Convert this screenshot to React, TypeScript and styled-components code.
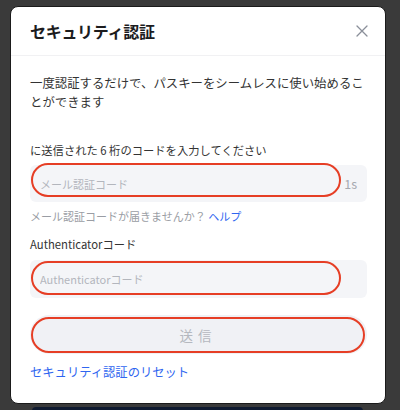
import { ReactElement } from 'react'
import styled, { createGlobalStyle } from 'styled-components'

const GlobalStyle = createGlobalStyle`
  html, body {
    margin: 0;
    padding: 0;
    background: #3a3a3a;
    font-family: "Noto Sans CJK JP", "Noto Sans", sans-serif;
  }
`

const Page = styled.div`
  width: 400px;
  height: 410px;
  padding: 6px 0 0 10px;
  box-sizing: border-box;
  overflow: hidden;
`

const Modal = styled.div`
  width: 376px;
  background: #ffffff;
  border: 1px solid #1b1b1b;
  border-radius: 8px;
  box-sizing: border-box;
`

const Header = styled.div`
  height: 48px;
  display: flex;
  align-items: center;
  justify-content: space-between;
  padding: 0 17px 0 19px;
  border-bottom: 1px solid #f1f1f3;
`

const Title = styled.h2`
  margin: 0;
  font-size: 16px;
  font-weight: 700;
  color: #1c1c1e;
  letter-spacing: -0.3px;
`

const CloseButton = styled.button`
  border: 0;
  background: none;
  padding: 0;
  width: 12px;
  height: 12px;
  display: flex;
  cursor: pointer;
`

const Body = styled.div`
  padding: 18px 18px 22px 19px;
  display: flex;
  flex-direction: column;
`

const Description = styled.p`
  margin: 0;
  font-size: 12.4px;
  line-height: 19px;
  color: #333333;
`

const Label = styled.div<{ $top: number }>`
  margin-top: ${(p) => p.$top}px;
  font-size: 11.3px;
  line-height: 16px;
  color: #333333;
`

const Field = styled.div<{ $top: number; $height: number }>`
  position: relative;
  margin-top: ${(p) => p.$top}px;
  height: ${(p) => p.$height}px;
  display: flex;
  align-items: center;
  background: #f4f5f8;
  border-radius: 6px;
  padding: 0 10px;
`

const Input = styled.input`
  flex: 1;
  border: 0;
  outline: none;
  background: transparent;
  font-family: inherit;
  font-size: 11px;
  color: #333;
  padding: 0;

  &::placeholder {
    color: #b3b6bd;
  }
`

const Countdown = styled.span`
  font-size: 12.5px;
  color: #a6a9b0;
`

// red hand-drawn ring over the field
const Ring = styled.span<{ $top: number; $left: number; $width: number; $height: number }>`
  position: absolute;
  top: ${(p) => p.$top}px;
  left: ${(p) => p.$left}px;
  width: ${(p) => p.$width}px;
  height: ${(p) => p.$height}px;
  border: 2.4px solid #e63e25;
  border-radius: 999px;
  box-sizing: border-box;
  pointer-events: none;
`

const Help = styled.div`
  margin-top: 6px;
  font-size: 11px;
  line-height: 16px;
  color: #9a9da4;
`

const Link = styled.a`
  color: #2f66f0;
  text-decoration: none;
  cursor: pointer;
`

const Submit = styled.button`
  position: relative;
  margin-top: 17px;
  height: 39px;
  border: 0;
  border-radius: 999px;
  background: #f0f1f5;
  color: #b5b8bf;
  font-family: inherit;
  font-size: 13.5px;
  letter-spacing: 5px;
  padding-left: 5px;
`

const Reset = styled(Link)`
  margin-top: 9px;
  font-size: 12.3px;
  line-height: 18px;
`

const Behind = styled.div`
  margin: 3px 0 0 22px;
  width: 331px;
  height: 10px;
  background: #0f1a30;
  border-radius: 4px 4px 0 0;
`

const CloseIcon = (): ReactElement => (
  <svg width="12" height="12" viewBox="0 0 12 12" fill="none">
    <path d="M1 1 L11 11 M11 1 L1 11" stroke="#8a8f99" strokeWidth="1.3" strokeLinecap="round" />
  </svg>
)

export default function App(): ReactElement {
  return (
    <Page>
      <GlobalStyle />
      <Modal>
        <Header>
          <Title>セキュリティ認証</Title>
          <CloseButton aria-label="close">
            <CloseIcon />
          </CloseButton>
        </Header>
        <Body>
          <Description>
            一度認証するだけで、パスキーをシームレスに使い始めることができます
          </Description>

          <Label $top={30}>に送信された 6 桁のコードを入力してください</Label>
          <Field $top={7} $height={37}>
            <Input placeholder="メール認証コード" />
            <Countdown>1s</Countdown>
            <Ring $top={-2} $left={1} $width={310} $height={34} />
          </Field>
          <Help>
            メール認証コードが届きませんか？ <Link>ヘルプ</Link>
          </Help>

          <Label $top={12}>Authenticatorコード</Label>
          <Field $top={8} $height={38}>
            <Input placeholder="Authenticatorコード" />
            <Ring $top={1} $left={1} $width={310} $height={34} />
          </Field>

          <Submit disabled>
            送信
            <Ring $top={2} $left={1} $width={334} $height={36} />
          </Submit>

          <Reset>セキュリティ認証のリセット</Reset>
        </Body>
      </Modal>
      <Behind />
    </Page>
  )
}
